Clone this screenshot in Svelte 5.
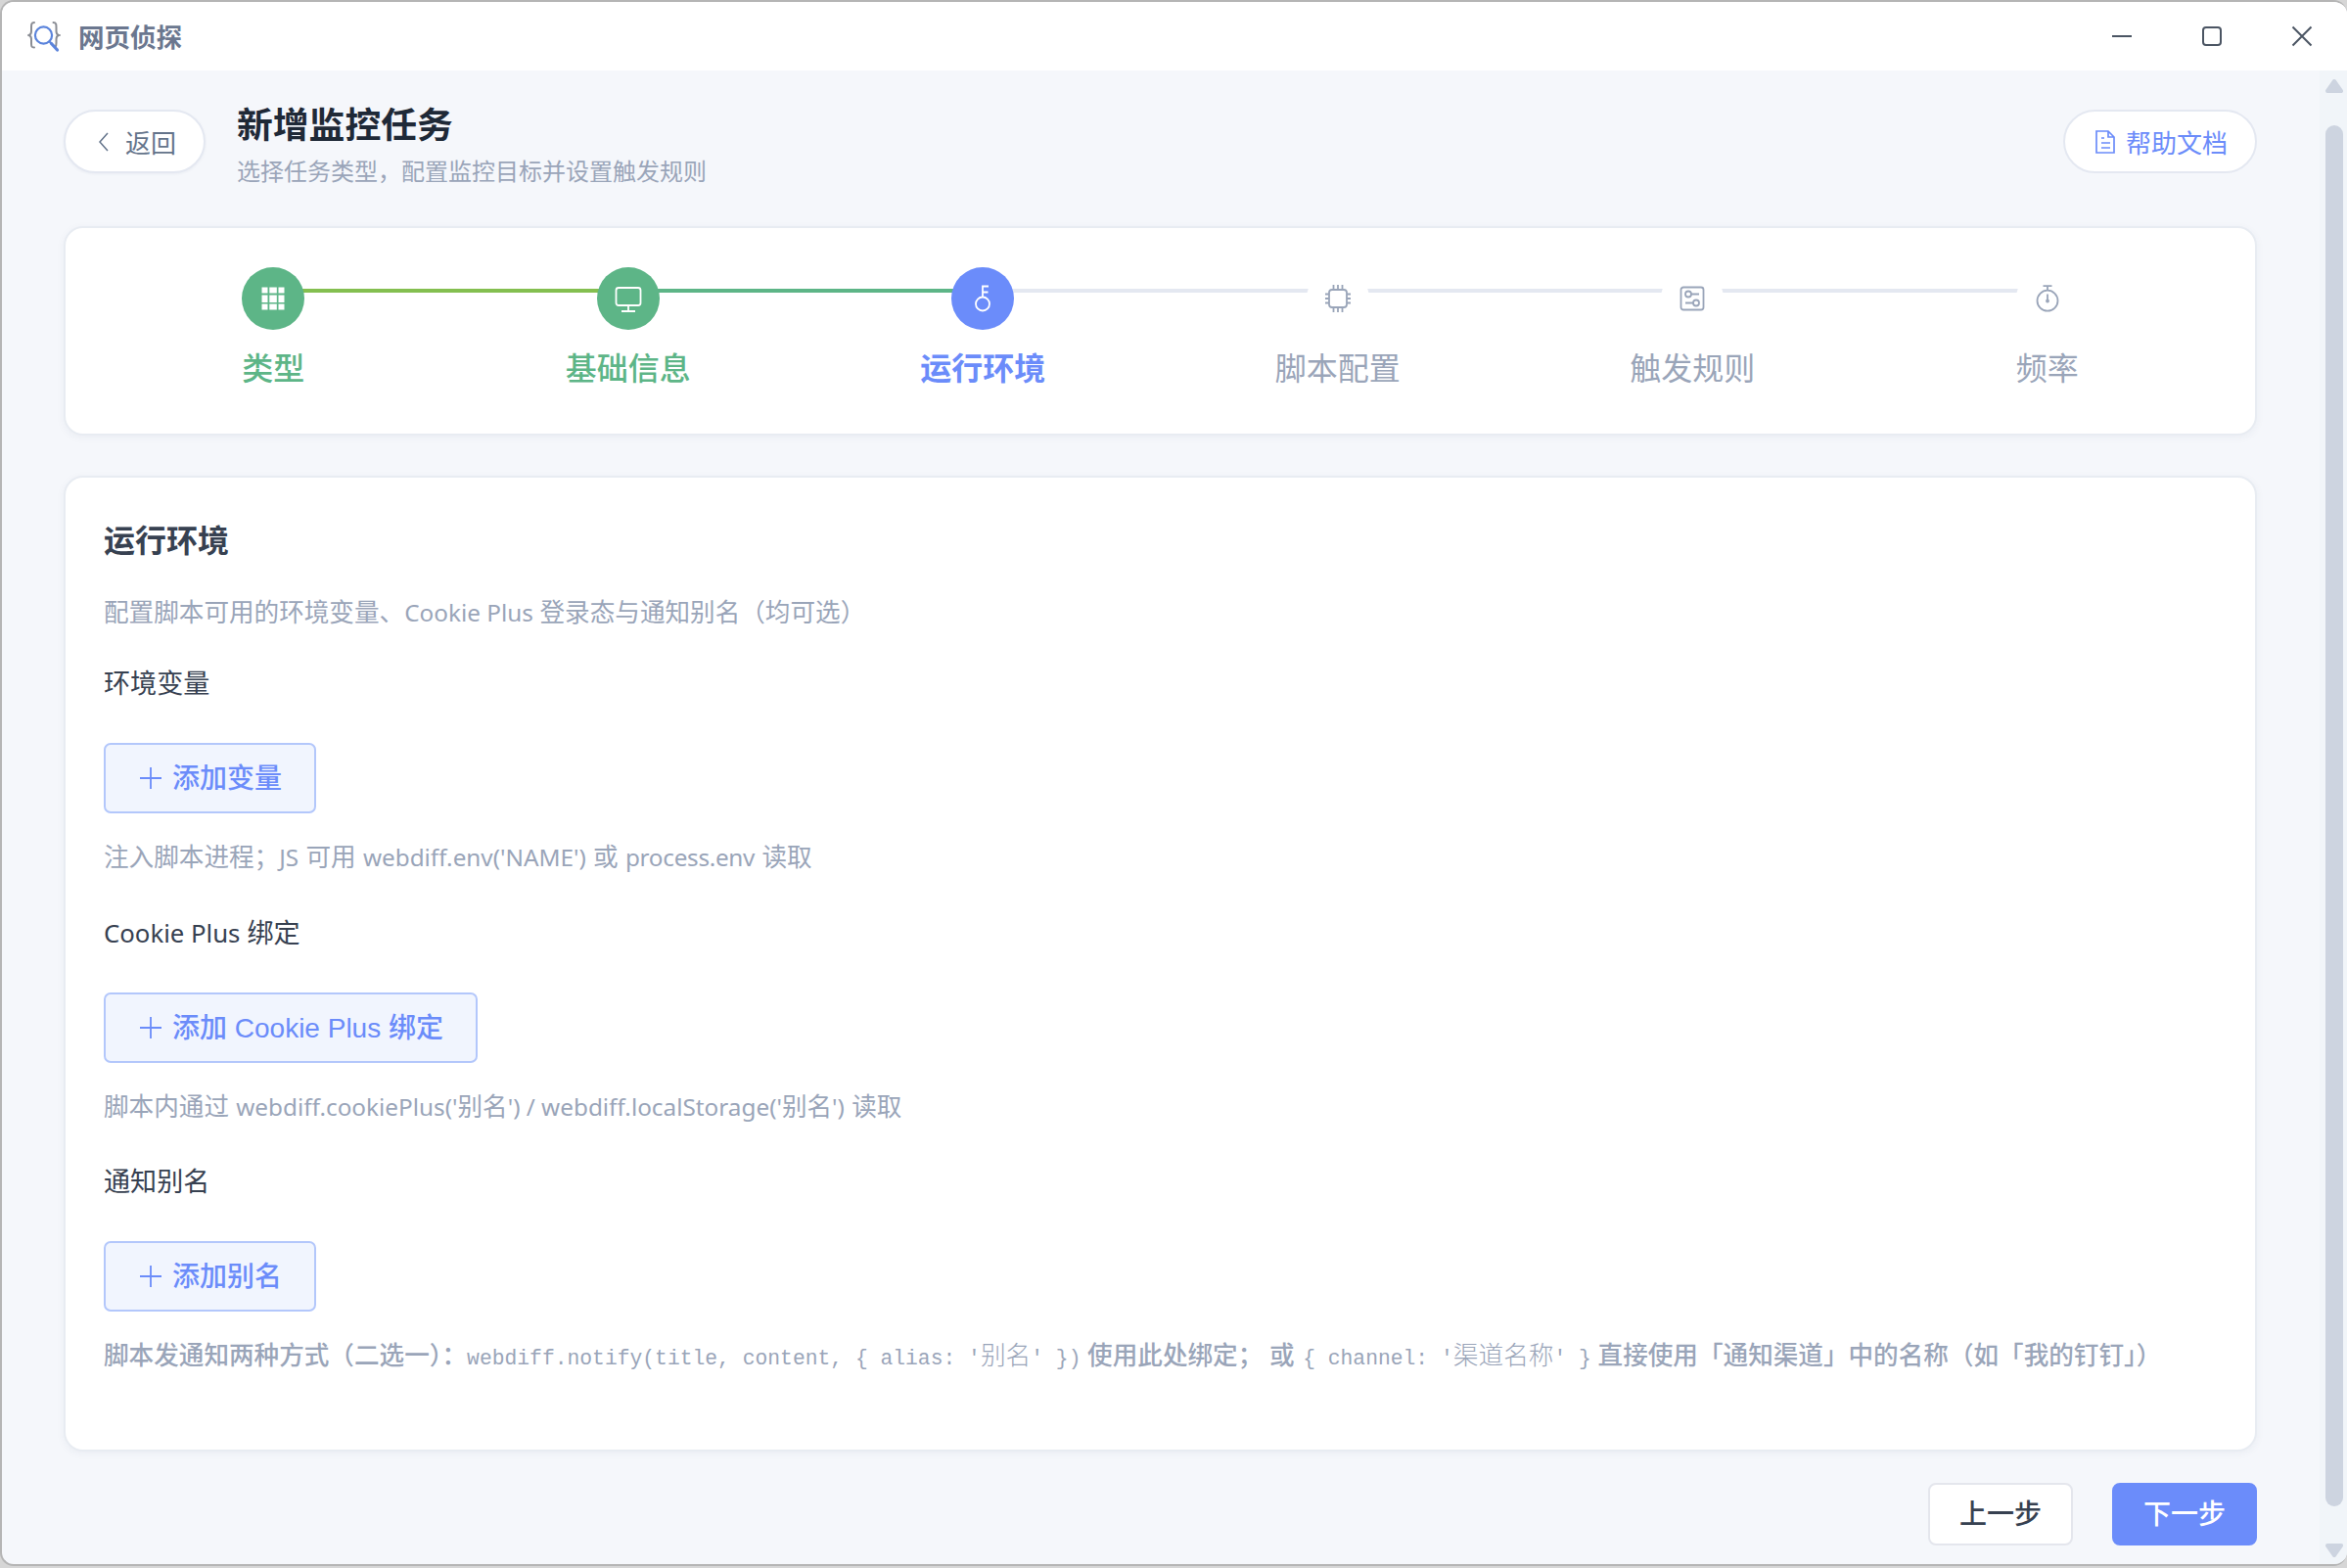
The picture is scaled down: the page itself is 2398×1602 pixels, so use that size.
<script>
  const steps = [
    { label: '类型', icon: 'grid', state: 'done first' },
    { label: '基础信息', icon: 'monitor', state: 'done' },
    { label: '运行环境', icon: 'key', state: 'active' },
    { label: '脚本配置', icon: 'cpu', state: 'todo' },
    { label: '触发规则', icon: 'rules', state: 'todo' },
    { label: '频率', icon: 'timer', state: 'todo' }
  ];
</script>

{#snippet plus()}
  <svg class="plus" viewBox="0 0 24 24"><path d="M12 1v22M1 12h22" /></svg>
{/snippet}

<div class="desktop">
  <div class="window">
    <header class="titlebar">
      <svg class="logo" viewBox="0 0 34 34">
        <g fill="none" stroke-linecap="round">
          <path d="M7 2C4 2 4 4 4 7v4c0 2.500-.8 3.500-2.500 4 1.700.5 2.500 1.500 2.500 4v4c0 3 0 4.500 3 4.500M26.500 2c3 0 3 2 3 5v4c0 2.500.8 3.500 2.500 4-1.700.5-2.500 1.500-2.500 4v4c0 2 0 3-1 4" stroke="#8a8d94" stroke-width="2" />
          <circle cx="16.500" cy="15" r="8.600" stroke="#5b84dc" stroke-width="2.200" />
          <path d="M22.500 21.500l2 2" stroke="#5b84dc" stroke-width="2.200" />
          <path d="M24.500 23.500l6 6.500" stroke="#5b84dc" stroke-width="3.200" />
        </g>
      </svg>
      <span class="app-name">网页侦探</span>
      <div class="controls">
        <svg viewBox="0 0 22 22"><path d="M1 11h20" /></svg>
        <svg viewBox="0 0 22 22"><rect x="2" y="2" width="18" height="18" rx="3" /></svg>
        <svg viewBox="0 0 22 22"><path d="M1.500 1.500l19 19M20.500 1.500l-19 19" /></svg>
      </div>
    </header>

    <div class="body">
      <main>
        <div class="page-head">
          <button class="pill back">
            <svg viewBox="0 0 12 20"><path d="M10 1L2 10l8 9" /></svg>
            <span>返回</span>
          </button>
          <div class="heading">
            <h1>新增监控任务</h1>
            <p>选择任务类型，配置监控目标并设置触发规则</p>
          </div>
          <button class="pill help">
            <svg viewBox="0 0 20 24"><path d="M1 1h12l6 6v16H1zM13 1v6h6M6 8h3M6 13h9M6 18h9" /></svg>
            <span>帮助文档</span>
          </button>
        </div>

        <section class="card steps">
          {#each steps as step}
            <div class="step {step.state}">
              <div class="dot">
                {#if step.icon === 'grid'}
                  <svg viewBox="0 0 28 28" class="solid">
                    {#each [2.500, 10.500, 19.500] as y}
                      <rect x="2.500" {y} width="6" height={y === 10.5 ? 7.5 : 6} />
                      <rect x="10.300" {y} width="7.500" height={y === 10.5 ? 7.5 : 6} />
                      <rect x="19.500" {y} width="6" height={y === 10.5 ? 7.5 : 6} />
                    {/each}
                  </svg>
                {:else if step.icon === 'monitor'}
                  <svg viewBox="0 0 28 28"><rect x="1.500" y="3" width="25" height="18" rx="2.500" /><path d="M14 21v6M7 27h14" /></svg>
                {:else if step.icon === 'key'}
                  <svg viewBox="0 0 28 28"><circle cx="14" cy="19.500" r="7" /><path d="M14 12.500V1.500h6M14 7.500h5.500" /></svg>
                {:else if step.icon === 'cpu'}
                  <svg viewBox="0 0 28 28"><rect x="5" y="5" width="18" height="18" rx="3" /><path d="M9.500 0v5M14 0v5M18.500 0v5M9.500 23v5M14 23v5M18.500 23v5M1 9.500h4M1 14h4M1 18.500h4M23 9.500h4M23 14h4M23 18.500h4" /></svg>
                {:else if step.icon === 'rules'}
                  <svg viewBox="0 0 28 28"><rect x="2.500" y="2.500" width="23" height="23" rx="2.500" /><circle cx="10" cy="9.500" r="3" /><path d="M13 9.500H21M7 18.500h8" /><circle cx="18" cy="18.500" r="3" /></svg>
                {:else}
                  <svg viewBox="0 0 28 28"><circle cx="14" cy="16.200" r="10.500" /><path d="M14 5.700V1.200M9.500 1.200h9M14 9.500v7" /><circle cx="14" cy="16.500" r="1" /></svg>
                {/if}
              </div>
              <span class="label">{step.label}</span>
            </div>
          {/each}
        </section>

        <section class="card env">
          <h2>运行环境</h2>
          <p class="desc">配置脚本可用的环境变量、<span class="lat">Cookie Plus</span> 登录态与通知别名（均可选）</p>

          <div class="field">
            <h3>环境变量</h3>
            <button class="add">{@render plus()}<span>添加变量</span></button>
            <p class="hint">注入脚本进程；<span class="lat">JS</span> 可用 <span class="lat">webdiff.env('NAME')</span> 或 <span class="lat tight">process.env</span> 读取</p>
          </div>
          <div class="field">
            <h3><span class="lat">Cookie Plus</span> 绑定</h3>
            <button class="add">{@render plus()}<span>添加 Cookie Plus 绑定</span></button>
            <p class="hint">脚本内通过 <span class="lat">webdiff.cookiePlus('</span>别名<span class="lat">') / webdiff.localStorage('</span>别名<span class="lat">')</span> 读取</p>
          </div>
          <div class="field">
            <h3>通知别名</h3>
            <button class="add">{@render plus()}<span>添加别名</span></button>
            <p class="hint medium">脚本发通知两种方式（二选一）：<code>webdiff.notify(title, content, {'{'} alias: '<i>别名</i>' {'}'})</code> 使用此处绑定； 或 <code>{'{'} channel: '<i>渠道名称</i>' {'}'}</code> 直接使用「通知渠道」中的名称（如「我的钉钉」）</p>
          </div>
        </section>

        <footer>
          <button class="nav">上一步</button>
          <button class="nav primary">下一步</button>
        </footer>
      </main>

      <aside class="scrollbar">
        <svg viewBox="0 0 18 14"><path d="M9 2L16 12H2z" /></svg>
        <div class="thumb"></div>
        <svg viewBox="0 0 18 14"><path d="M9 12L16 2H2z" /></svg>
      </aside>
    </div>
  </div>
</div>

<style>
  :global(body) { background: #d6d6d6; }
  * { box-sizing: border-box; }
  h1, h2, h3, p { margin: 0; font-weight: 400; white-space: nowrap; }
  svg { flex: none; fill: none; stroke: currentColor; }
  button { font: inherit; white-space: nowrap; padding: 0; }

  .desktop {
    height: 1602px;
    overflow: hidden;
    font-family: "Noto Sans", "Noto Sans CJK SC", sans-serif;
  }
  .window {
    height: 1600px;
    display: flex;
    flex-direction: column;
    border: 2px solid #b5b5b5;
    border-right-width: 0;
    border-radius: 14px;
    overflow: hidden;
    background: #f5f7fb;
  }
  .titlebar {
    height: 70px;
    flex: none;
    display: flex;
    align-items: center;
    padding: 0 35px 0 26px;
    background: #fff;
  }
  .logo { width: 34px; height: 34px; margin-top: 2px; }
  .app-name {
    margin: 2px 0 0 18px;
    font-size: 26.500px;
    line-height: 40px;
    font-weight: 700;
    color: #6b778f;
  }
  .controls {
    margin-left: auto;
    display: flex;
    gap: 70px;
    color: #4b5563;
  }
  .controls svg { width: 22px; height: 22px; stroke-width: 2; }

  .body { flex: 1; display: flex; min-height: 0; }
  main { flex: 1; padding: 0 64px 0 63px; }

  .page-head { height: 159px; padding-top: 28px; display: flex; align-items: flex-start; }
  .pill {
    height: 65px;
    margin-top: 12px;
    border: 2px solid #e4e8f1;
    border-radius: 33px;
    background: #fff;
    display: flex;
    align-items: center;
    justify-content: center;
    font-size: 26px;
  }
  .back { width: 145px; gap: 16px; padding-left: 5px; color: #64748b; box-shadow: 0 1px 3px rgba(30, 50, 90, .05); }
  .back svg { width: 12px; height: 20px; stroke-width: 1.500; }
  .help { width: 198px; gap: 11px; padding-left: 3px; margin-left: auto; color: #6b8cfa; }
  .help svg { width: 20px; height: 24px; stroke-width: 1.700; }
  .heading { margin-left: 32px; }
  h1 { font-size: 36.800px; line-height: 50px; padding-top: 2px; font-weight: 700; color: #1f2937; }
  .heading p { font-size: 24px; line-height: 36px; margin-top: 5px; color: #9aa5b9; }

  .card {
    background: #fff;
    border: 2px solid #e8ecf2;
    border-radius: 20px;
    box-shadow: 0 2px 8px rgba(30, 50, 90, .05);
  }
  .steps { height: 214px; display: flex; padding: 40px 31px 0; }
  .step {
    flex: 1;
    display: flex;
    flex-direction: column;
    align-items: center;
    position: relative;
    color: #9aa5b9;
  }
  .step:not(:last-child)::after {
    content: "";
    position: absolute;
    left: 50%;
    top: 22px;
    width: 100%;
    height: 4px;
    background: #e4e8f1;
  }
  .step.done::after { background: #5db587; }
  .step.first::after { background: #84bf50; }
  .dot {
    width: 64px;
    height: 64px;
    border-radius: 50%;
    background: #fff;
    display: flex;
    align-items: center;
    justify-content: center;
    position: relative;
    z-index: 1;
  }
  .dot svg { width: 28px; height: 28px; stroke-width: 1.800; overflow: visible; }
  .dot .solid { fill: #fff; stroke: none; }
  .label { margin-top: 16px; font-size: 32px; line-height: 46px; }
  .done { color: #5db587; }
  .done .dot { background: #5db587; color: #fff; }
  .done .label { font-weight: 500; }
  .active { color: #6b8cfa; }
  .active .dot { background: #6b8cfa; color: #fff; }
  .active .label { font-weight: 700; }

  .env { margin-top: 41px; height: 997px; padding: 39px 39px 0; }
  h2 { font-size: 32px; line-height: 50px; font-weight: 700; color: #374151; }
  .desc { margin-top: 29px; font-size: 25.600px; line-height: 40px; color: #9aa5b9; }
  .field { height: 254.500px; padding-top: 32px; }
  h3 { font-size: 27.100px; line-height: 40px; color: #374151; }
  .lat { font-size: .95em; }
  .tight { letter-spacing: -.3px; }
  .add {
    margin-top: 41px;
    height: 72px;
    padding: 0 33px 4px 34px;
    display: flex;
    align-items: center;
    gap: 10px;
    border: 2px solid #b3c7fb;
    border-radius: 7px;
    background: #f1f5fe;
    color: #6b8cfa;
    font-family: "Liberation Sans", "Noto Sans CJK SC", sans-serif;
    font-size: 28px;
    font-weight: 500;
  }
  .plus { width: 24px; height: 24px; stroke-width: 1.800; margin-top: 4px; }
  .hint { margin-top: 25px; font-size: 25.600px; line-height: 40px; color: #9aa5b9; word-spacing: .6px; }
  .lat, .medium { word-spacing: 0; }
  .medium { font-weight: 500; }
  code {
    font-family: "Liberation Mono", "Noto Sans CJK SC", monospace;
    font-size: 21.330px;
    font-weight: 400;
  }
  code + code { margin-left: 2px; }
  code i { font-style: normal; font-size: 25.700px; font-weight: 300; }

  footer { margin-top: 32px; display: flex; justify-content: flex-end; gap: 40px; }
  .nav {
    width: 148px;
    height: 64px;
    padding-bottom: 5px;
    border: 2px solid #e4e6ed;
    border-radius: 8px;
    background: #fff;
    color: #374151;
    font-size: 28px;
    font-weight: 500;
  }
  .primary { background: #6b8cfa; border-color: #6b8cfa; color: #fff; }

  .scrollbar {
    width: 28px;
    padding: 9px 4px 7px 6px;
    display: flex;
    flex-direction: column;
    background: #f1f5f9;
    color: #cdd4e0;
  }
  .scrollbar svg { width: 18px; height: 14px; fill: currentColor; stroke-width: 4; stroke-linejoin: round; }
  .thumb { flex: 1; margin: 33px 0 38px; border-radius: 9px; background: #cdd4e0; }
</style>
